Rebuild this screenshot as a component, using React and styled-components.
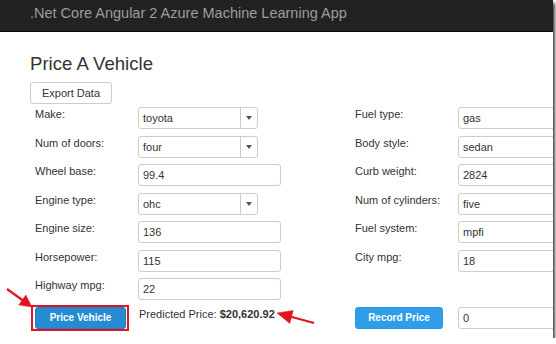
import styled, { createGlobalStyle } from "styled-components";

const GlobalStyle = createGlobalStyle`
  html, body {
    margin: 0;
    padding: 0;
    background: #fff;
  }
  body {
    font-family: "Liberation Sans", Arial, sans-serif;
    color: #333;
  }
`;

const Frame = styled.div`
  position: relative;
  width: 553px;
  height: 338px;
  overflow: hidden;
  background: #fff;
  box-shadow: 2px 3px 3px rgba(0, 0, 0, 0.75);
`;

const Navbar = styled.header`
  height: 31px;
  background-color: #222;
  border-bottom: 1px solid #080808;
  padding: 3px 0 0 30px;
  box-sizing: border-box;
  height: 32px;
`;

const Brand = styled.span`
  font-size: 14.5px;
  line-height: 20px;
  color: #9d9d9d;
  white-space: nowrap;
`;

const Container = styled.div`
  padding: 0 30px;
`;

const Title = styled.h2`
  margin: 21.5px 0 0;
  font-size: 18.6px;
  line-height: 20.5px;
  font-weight: 400;
  color: #333;
`;

const Button = styled.button`
  font-family: inherit;
  box-sizing: border-box;
  height: 22px;
  border-radius: 3px;
  cursor: pointer;
  white-space: nowrap;
`;

const ExportButton = styled(Button)`
  display: block;
  margin-top: 8px;
  width: 82px;
  padding: 0;
  font-size: 11px;
  color: #333;
  background: #fff;
  border: 1px solid #ccc;
`;

const PrimaryButton = styled(Button)`
  position: relative;
  width: ${(p) => p.$width}px;
  padding: 0;
  font-size: 10px;
  font-weight: 700;
  color: #fff;
  border: 1px solid ${(p) => (p.$active ? "#1f7fc4" : "#2b97e0")};
  background: ${(p) => (p.$active ? "#258bd2" : "#2f9de8")};

  ${(p) =>
    p.$highlight &&
    `
    &::after {
      content: "";
      position: absolute;
      top: -3px;
      bottom: -3px;
      left: -5px;
      right: -4px;
      border: 2px solid #e3141f;
      pointer-events: none;
    }
  `}
`;

const Form = styled.div`
  display: grid;
  grid-template-columns: 320px 320px;
  margin-top: 3px;
  padding-left: 5px;
`;

const Column = styled.div`
  display: flex;
  flex-direction: column;
  gap: 6.5px;
`;

const Row = styled.div`
  display: flex;
  align-items: flex-start;
  height: 22px;
`;

const Label = styled.label`
  flex: 0 0 103px;
  font-size: 11px;
  line-height: 14px;
  color: #333;
  white-space: nowrap;
`;

const Field = styled.div`
  box-sizing: border-box;
  display: flex;
  align-items: center;
  height: 22px;
  width: ${(p) => p.$width || 143}px;
  flex: 0 0 auto;
  border: 1px solid #ccc;
  border-radius: 3px;
  background: #fff;
  font-size: 11px;
  color: #333;
  padding-left: 4px;
`;

const SelectValue = styled.span`
  flex: 1;
`;

const Caret = styled.span`
  align-self: stretch;
  width: 16px;
  border-left: 1px solid #ccc;
  display: flex;
  align-items: center;
  justify-content: center;

  &::before {
    content: "";
    border-left: 3px solid transparent;
    border-right: 3px solid transparent;
    border-top: 4px solid #555;
  }
`;

const Result = styled.div`
  font-size: 11px;
  line-height: 14px;
  color: #333;
  white-space: nowrap;
  padding-left: 13px;

  b {
    font-weight: 700;
  }
`;

const Spacer = styled.div`
  height: 22px;
`;

const ButtonCell = styled.div`
  flex: 0 0 103px;
`;

const Overlay = styled.svg`
  position: absolute;
  left: 0;
  top: 0;
  pointer-events: none;
`;

function Select({ value }) {
  return (
    <Field $width={120}>
      <SelectValue>{value}</SelectValue>
      <Caret />
    </Field>
  );
}

function Input({ value }) {
  return <Field>{value}</Field>;
}

const leftFields = [
  ["Make:", "toyota", true],
  ["Num of doors:", "four", true],
  ["Wheel base:", "99.4"],
  ["Engine type:", "ohc", true],
  ["Engine size:", "136"],
  ["Horsepower:", "115"],
  ["Highway mpg:", "22"],
];

const rightFields = [
  ["Fuel type:", "gas"],
  ["Body style:", "sedan"],
  ["Curb weight:", "2824"],
  ["Num of cylinders:", "five"],
  ["Fuel system:", "mpfi"],
  ["City mpg:", "18"],
];

function FieldRow({ label, value, select }) {
  return (
    <Row>
      <Label>{label}</Label>
      {select ? <Select value={value} /> : <Input value={value} />}
    </Row>
  );
}

export default function App() {
  return (
    <>
      <GlobalStyle />
      <Frame>
        <Navbar>
          <Brand>.Net Core Angular 2 Azure Machine Learning App</Brand>
        </Navbar>
        <Container>
          <Title>Price A Vehicle</Title>
          <ExportButton>Export Data</ExportButton>
          <Form>
            <Column>
              {leftFields.map(([l, v, s]) => (
                <FieldRow key={l} label={l} value={v} select={s} />
              ))}
              <Row>
                <PrimaryButton $width={91} $active $highlight>
                  Price Vehicle
                </PrimaryButton>
                <Result>
                  Predicted Price: <b>$20,620.92</b>
                </Result>
              </Row>
            </Column>
            <Column>
              {rightFields.map(([l, v]) => (
                <FieldRow key={l} label={l} value={v} />
              ))}
              <Spacer />
              <Row>
                <ButtonCell>
                  <PrimaryButton $width={88}>Record Price</PrimaryButton>
                </ButtonCell>
                <Input value="0" />
              </Row>
            </Column>
          </Form>
        </Container>
        <Overlay width="553" height="338" viewBox="0 0 553 338">
          <g fill="#e3141f" stroke="#e3141f">
            <line x1="7" y1="289" x2="23" y2="300.5" strokeWidth="2.2" />
            <polygon points="32,307 18.8,304.9 25.8,295.1" strokeWidth="0.5" />
            <line x1="314" y1="323" x2="291" y2="316.8" strokeWidth="2.2" />
            <polygon points="277,313 293.2,310.4 289.8,323.4" strokeWidth="0.5" />
          </g>
        </Overlay>
      </Frame>
    </>
  );
}
